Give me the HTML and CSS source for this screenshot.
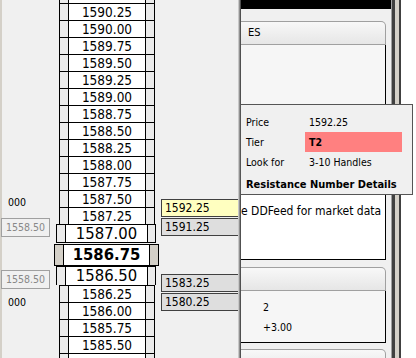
FILE: index.html
```html
<!DOCTYPE html>
<html lang="en">
<head>
    <meta charset="UTF-8">
    <title>Price Ladder</title>
    <link rel="stylesheet" href="styles.css">
</head>
<body>
    <div class="app">
        <div class="edge"></div>

        <div class="side">
            <div class="vol">000</div>
            <div class="ref">1558.50</div>
            <div class="ref ref-low">1558.50</div>
            <div class="vol vol-low">000</div>
        </div>

        <div class="ladder">
            <div class="row"><div class="g"></div><div class="w"></div><div class="g"></div></div>
            <div class="row"><div class="g"></div><div class="w">1590.25</div><div class="g"></div></div>
            <div class="row"><div class="g"></div><div class="w">1590.00</div><div class="g"></div></div>
            <div class="row"><div class="g"></div><div class="w">1589.75</div><div class="g"></div></div>
            <div class="row"><div class="g"></div><div class="w">1589.50</div><div class="g"></div></div>
            <div class="row"><div class="g"></div><div class="w">1589.25</div><div class="g"></div></div>
            <div class="row"><div class="g"></div><div class="w">1589.00</div><div class="g"></div></div>
            <div class="row"><div class="g"></div><div class="w">1588.75</div><div class="g"></div></div>
            <div class="row"><div class="g"></div><div class="w">1588.50</div><div class="g"></div></div>
            <div class="row"><div class="g"></div><div class="w">1588.25</div><div class="g"></div></div>
            <div class="row"><div class="g"></div><div class="w">1588.00</div><div class="g"></div></div>
            <div class="row"><div class="g"></div><div class="w">1587.75</div><div class="g"></div></div>
            <div class="row"><div class="g"></div><div class="w">1587.50</div><div class="g"></div></div>
            <div class="row"><div class="g"></div><div class="w">1587.25</div><div class="g"></div></div>

            <div class="big"><div class="g"></div><div class="w">1587.00</div><div class="g"></div></div>
            <div class="cur"><div class="g"></div><div class="w">1586.75</div><div class="g"></div></div>
            <div class="big open"><div class="g"></div><div class="w">1586.50</div><div class="g"></div></div>

            <div class="row"><div class="g"></div><div class="w">1586.25</div><div class="g"></div></div>
            <div class="row"><div class="g"></div><div class="w">1586.00</div><div class="g"></div></div>
            <div class="row"><div class="g"></div><div class="w">1585.75</div><div class="g"></div></div>
            <div class="row"><div class="g"></div><div class="w">1585.50</div><div class="g"></div></div>
            <div class="row"><div class="g"></div><div class="w"></div><div class="g"></div></div>
        </div>

        <div class="orders">
            <div class="ord hit">1592.25</div>
            <div class="ord">1591.25</div>
            <div class="ord ord-low">1583.25</div>
            <div class="ord">1580.25</div>
        </div>

        <div class="split"></div>

        <div class="right">
            <div class="topbar"></div>

            <div class="panel">
                <div class="phead">ES</div>
                <div class="pbody first">
                    <div class="note">e DDFeed for market data</div>
                </div>
            </div>

            <div class="panel second">
                <div class="phead"></div>
                <div class="pbody stats">
                    <div>2</div>
                    <div>+3.00</div>
                </div>
            </div>

            <div class="panel third">
                <div class="phead"></div>
            </div>
        </div>

        <div class="frame"></div>

        <!-- hover popup over the right panel -->
        <div class="tip">
            <div class="tip-row"><span class="tip-label">Price</span><span class="tip-val">1592.25</span></div>
            <div class="tip-row"><span class="tip-label">Tier</span><span class="tip-val tier">T2</span></div>
            <div class="tip-row"><span class="tip-label">Look for</span><span class="tip-val">3-10 Handles</span></div>
            <div class="tip-title">Resistance Number Details</div>
        </div>
    </div>
</body>
</html>
```

FILE: styles.css
```css
body {
    margin: 0;
    background: #f0f0f0;
    font-family: "DejaVu Sans Condensed", "Liberation Sans", sans-serif;
    color: #000;
}

.app {
    position: relative;
    display: flex;
    width: 416px;
    height: 358px;
    overflow: hidden;
}

.edge {
    flex: none;
    width: 2px;
    background: #d4d0c8;
}

/* left info column */
.side {
    flex: none;
    width: 52px;
    padding: 196px 0 0 6px;
    box-sizing: border-box;
}

.vol {
    font-size: 10.5px;
    line-height: 13px;
}

.vol-low {
    margin-top: 7px;
}

.ref {
    width: 49px;
    height: 19px;
    margin: 9px 0 0 -7px;
    box-sizing: border-box;
    border: 1px solid #a0a0a0;
    color: #888;
    font-size: 10.5px;
    line-height: 17px;
    text-align: center;
}

.ref-low {
    margin-top: 33px;
}

/* price ladder */
.ladder {
    flex: none;
    width: 105px;
    margin-top: -14px;
}

.ladder div {
    box-sizing: border-box;
}

.row {
    display: flex;
    height: 17px;
    margin-left: 5px;
}

.row > div {
    border-top: 1px solid #000;
    border-left: 1px solid #000;
}

.row .g {
    width: 9px;
    background: #ebebeb;
}

.row .g:last-child {
    width: 10px;
    border-right: 1px solid #000;
}

.row .w {
    width: 77px;
    background: #fff;
    text-align: center;
    font-size: 13.5px;
    line-height: 16px;
}

.big,
.cur {
    display: flex;
}

.big {
    height: 19px;
    margin: 0 0 1px 2px;
}

.big > div,
.cur > div {
    border: 1px solid #000;
    border-right: 0;
}

.big .g {
    width: 9px;
    background: #ebebeb;
}

.big .g:last-child {
    border-right: 1px solid #000;
}

.big .w {
    width: 82px;
    background: #fff;
    text-align: center;
    font-size: 16.5px;
    line-height: 17px;
}

.big.open {
    margin-bottom: 0;
}

.big.open > div {
    border-bottom: 0;
}

.big.open .w {
    line-height: 18px;
}

.cur {
    height: 22px;
}

.cur .g {
    width: 9px;
    background: #d4d0c8;
}

.cur .g:last-child {
    width: 10px;
    border-right: 1px solid #000;
}

.cur .w {
    width: 86px;
    background: #fff;
    text-align: center;
    font-size: 16.5px;
    font-weight: bold;
    line-height: 20px;
}

/* working orders */
.orders {
    flex: none;
    width: 79px;
    padding: 199px 0 0 2px;
    box-sizing: border-box;
}

.ord {
    height: 18px;
    margin-bottom: 1px;
    padding-left: 3px;
    box-sizing: border-box;
    border: 1px solid #404040;
    border-right: 0;
    background: #dedede;
    font-size: 12px;
    line-height: 16px;
}

.ord.hit {
    background: #ffffc0;
}

.ord-low {
    margin-top: 38px;
}

.split {
    flex: none;
    width: 3px;
    background: linear-gradient(to right, #c8c8c8 0 1px, #909090 1px 2px, #505050 2px);
}

/* right side panels */
.right {
    flex: none;
    width: 150px;
    display: flex;
    flex-direction: column;
}

.right > div {
    flex: none;
}

.topbar {
    height: 9px;
    background: #000;
}

.panel {
    margin: 12px 5px 0 0;
}

.panel.second {
    margin-top: 7px;
}

.panel.third {
    margin-top: 6px;
}

.phead {
    height: 24px;
    box-sizing: border-box;
    padding-left: 7px;
    border-top: 1px solid #a0a0a0;
    border-right: 1px solid #a0a0a0;
    border-bottom: 1px solid #a0a0a0;
    border-top-right-radius: 5px;
    background: linear-gradient(#f8f8f8, #e6e6e6);
    font-size: 11px;
    line-height: 22px;
}

.pbody {
    box-sizing: border-box;
    border-right: 1px solid #000;
    border-bottom: 1px solid #000;
    background: #f6f6f6;
}

.pbody.first {
    height: 215px;
    padding-top: 59px;
}

.note {
    height: 155px;
    padding-top: 100px;
    box-sizing: border-box;
    overflow: hidden;
    background: #fff;
    font-size: 12px;
    line-height: 14px;
    white-space: nowrap;
}

.pbody.stats {
    height: 52px;
    padding: 6px 0 0 22px;
    font-size: 10.5px;
    line-height: 20px;
}

.frame {
    flex: none;
    width: 25px;
    background: linear-gradient(to right, #a0a0a0 0 1px, #404040 1px 4px, #d4d0c8 4px 8px, #404040 8px 10px, #fff 10px);
}

/* popup */
.tip {
    position: absolute;
    left: 240px;
    top: 104px;
    width: 173px;
    height: 91px;
    box-sizing: border-box;
    padding: 7px 0 0 5px;
    border: 1px solid #555;
    background: #f0f0f0;
    font-size: 10.5px;
}

.tip-row {
    display: flex;
    height: 20px;
    line-height: 20px;
}

.tip-label {
    width: 59px;
}

.tip-val {
    width: 97px;
    padding-left: 4px;
    box-sizing: border-box;
}

.tier {
    background: #ff8080;
    font-weight: bold;
}

.tip-title {
    margin-top: 3px;
    font-size: 11px;
    font-weight: bold;
    line-height: 19px;
}
```
